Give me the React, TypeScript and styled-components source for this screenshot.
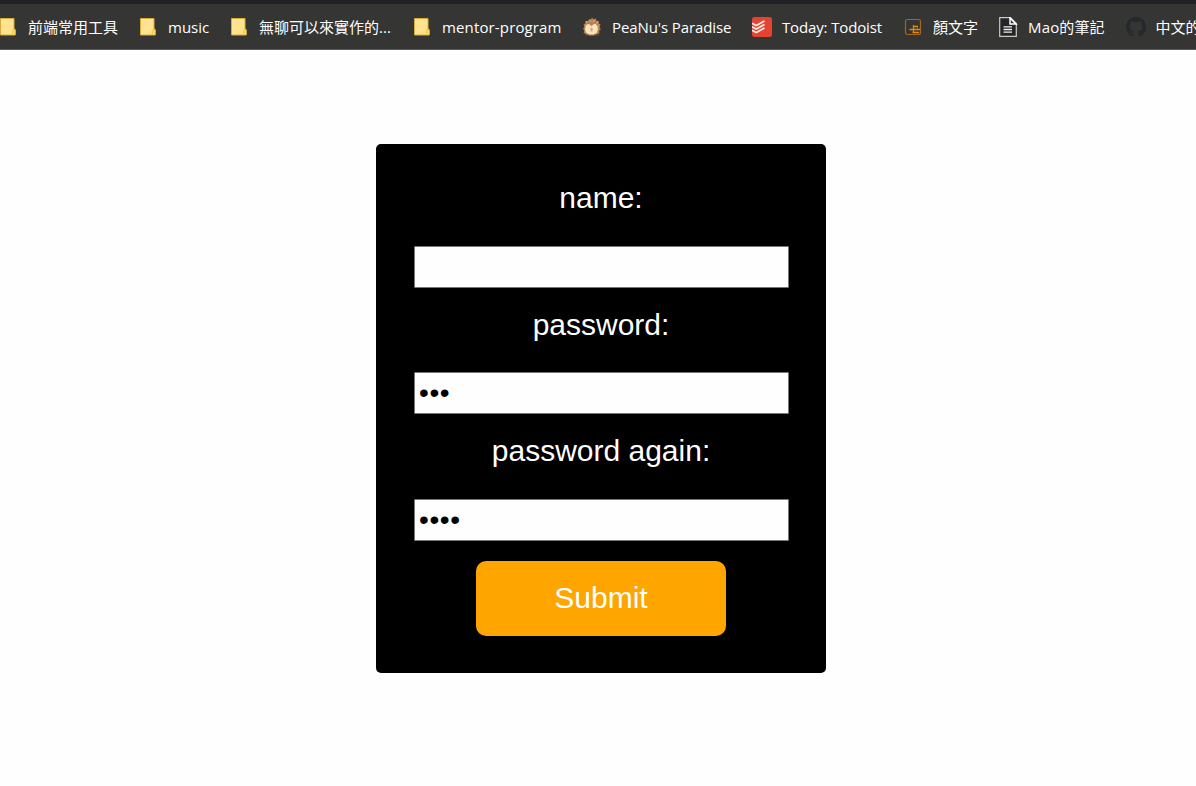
import React from "react";
import styled, { createGlobalStyle } from "styled-components";

const GlobalStyle = createGlobalStyle`
  * { box-sizing: border-box; }
  body {
    margin: 0;
    background: #fefefe;
    overflow: hidden;
    font-family: "Liberation Sans", Arial, sans-serif;
  }
`;

const Page = styled.div`
  width: 100%;
  height: 786px;
  display: flex;
  flex-direction: column;
  overflow: hidden;
`;

const BookmarkBar = styled.nav`
  flex: none;
  height: 50px;
  display: flex;
  align-items: center;
  gap: 20px;
  margin-left: -2px;
  background: #353533;
  border-top: 4px solid #202124;
  border-bottom: 1px solid #5b5b59;
  overflow: hidden;
`;

const Bookmark = styled.div`
  flex: none;
  display: flex;
  align-items: center;
  gap: 10px;
  height: 24px;
`;

const BookmarkLabel = styled.span<{ $width: number; $spacing?: number }>`
  width: ${(p) => p.$width}px;
  letter-spacing: ${(p) => p.$spacing ?? 0}px;
  font: 15px/24px "Open Sans", "Noto Sans CJK TC", sans-serif;
  color: #fff;
  white-space: nowrap;
`;

const Icon = styled.svg`
  flex: none;
  display: block;
  width: 20px;
  height: 20px;
`;

const Main = styled.main`
  flex: 1;
  display: flex;
  justify-content: center;
  align-items: flex-start;
  padding: 94px 0 0 6px;
`;

const Card = styled.form`
  width: 450px;
  height: 529px;
  display: flex;
  flex-direction: column;
  align-items: center;
  padding-top: 37px;
  background: #000;
  border-radius: 5px;
`;

const Field = styled.label<{ $height: number }>`
  display: flex;
  flex-direction: column;
  align-items: center;
  justify-content: space-between;
  height: ${(p) => p.$height}px;
  margin-bottom: 20px;
  color: #fff;
  font-size: 30px;
  line-height: 34px;
`;

const Input = styled.input`
  width: 375px;
  height: 42px;
  margin: 0 0 0 1px;
  padding: 1px 3px 1px 4px;
  border: 1px solid #767676;
  border-radius: 1px;
  background: #fefefe;
  color: #000;
  font: 30px "Liberation Sans", Arial, sans-serif;
  outline: none;

  &[type="password"] {
    padding-bottom: 2px;
    font-size: 28px;
    letter-spacing: 0.6px;
  }
`;

const SubmitButton = styled.button`
  width: 250px;
  height: 75px;
  padding: 0 0 2px;
  border: 0;
  border-radius: 10px;
  background: #ffa500;
  color: #fff;
  font: 30px "Liberation Sans", Arial, sans-serif;
`;

const FolderIcon = () => (
  <Icon viewBox="0 0 20 20">
    <path d="M2.5 1.5h13.5v11h1.2v5.5H2.5z" fill="#ffe391" stroke="#d9ab3c" />
    <path d="M14.5 17.5v-4.2l1.5-1.3v-1" fill="none" stroke="#f0c02e" />
    <path d="M14.5 13h2.8v4.6h-2.8z" fill="#ffd75e" />
  </Icon>
);

const HedgehogIcon = () => (
  <Icon viewBox="0 0 20 20">
    <path
      d="M10 .5l1.4 1.8L14 1.6l.3 2.2 2.7.2-.4 2.3 2 1.3-1.1 2.1 1.3 2.5-1.6 1.4.2 2.8-2.3.5-1.4 1.7H5l-1.2-1.7-2.1-.8.5-2.6L1 11.8l1.3-2-.7-2.2 1.9-1.3-.1-2.3 2.7-.1L7 2l1.9.4z"
      fill="#b9814f"
    />
    <path d="M4 4l1 2M8 3l.4 2M12 3l-.4 2M16 5l-1.7 1.5M17 9l-2 .5M3 8l2 .5" stroke="#dfb080" />
    <path d="M3.600 9l2.200-2 2 .4 1.700 1.800 2-1.900 2.400-.2 1.500 2.400.6 3-1.400 3.600-2.600 1.400H6.600L4 15.600l-1-3z" fill="#f6e3bf" />
    <path d="M9.500 10.200l1.500 2-.7 2.400H8.700L8 12.200z" fill="#dba97a" />
    <path d="M3 18.200h4M12 18.200h5" stroke="#62462f" strokeWidth="1.2" />
  </Icon>
);

const TodoistIcon = () => (
  <Icon viewBox="0 0 20 20">
    <rect width="20" height="20" rx="2.3" fill="#e44332" />
    <g fill="none" stroke="#fff0e8" strokeWidth="1.7">
      <path d="M0 6.2l3.6 2.1q.6.3 1.2 0L12.5 4" />
      <path d="M0 9.7l3.6 2.1q.6.3 1.2 0l7.7-4.3" />
      <path d="M0 13.2l3.6 2.1q.6.3 1.2 0l7.7-4.3" />
    </g>
  </Icon>
);

const KaomojiIcon = () => (
  <Icon viewBox="0 0 20 20" fill="none">
    <rect x="2.5" y="2.5" width="15" height="15" rx="2" stroke="#a5661a" strokeWidth="1.2" />
    <path d="M10.500 8v7.500M10.500 9.500H15M6.500 12.500H17M9.500 15.500H16" stroke="#d98a17" strokeWidth="1.3" />
    <path d="M14.500 10v2" stroke="#a5661a" />
  </Icon>
);

const NoteIcon = () => (
  <Icon viewBox="0 0 20 20">
    <path d="M1.7.7h10.8l5.8 5.8v12.8H1.7z" fill="#252528" stroke="#c9c9c9" strokeWidth="1.2" />
    <path d="M12 1v6h6z" fill="#353533" stroke="#fff" strokeWidth="1.5" />
    <path d="M5.5 9.8H14M5.5 12.5H14M5.5 15.2H14" stroke="#eee" strokeWidth="1.3" />
  </Icon>
);

const GithubIcon = () => (
  <Icon viewBox="0 0 16 16" fill="#24292e">
    <path d="M8 0C3.58 0 0 3.58 0 8c0 3.54 2.29 6.53 5.47 7.59.4.07.55-.17.55-.38 0-.19-.01-.82-.01-1.49-2.01.37-2.53-.49-2.69-.94-.09-.23-.48-.94-.82-1.13-.28-.15-.68-.52-.01-.53.63-.01 1.08.58 1.23.82.72 1.21 1.87.87 2.33.66.07-.52.28-.87.51-1.07-1.78-.2-3.64-.89-3.64-3.95 0-.87.31-1.59.82-2.15-.08-.2-.36-1.02.08-2.12 0 0 .67-.21 2.2.82a7.6 7.6 0 0 1 4 0c1.53-1.04 2.2-.82 2.2-.82.44 1.1.16 1.92.08 2.12.51.56.82 1.27.82 2.15 0 3.07-1.87 3.75-3.65 3.95.29.25.54.73.54 1.48 0 1.07-.01 1.93-.01 2.2 0 .21.15.46.55.38A8 8 0 0 0 16 8c0-4.42-3.58-8-8-8z" />
  </Icon>
);

const bookmarks = [
  { label: "前端常用工具", width: 90, icon: <FolderIcon /> },
  { label: "music", width: 41, icon: <FolderIcon /> },
  { label: "無聊可以來實作的...", width: 133, icon: <FolderIcon /> },
  { label: "mentor-program", width: 120, spacing: 0.14, icon: <FolderIcon /> },
  { label: "PeaNu's Paradise", width: 120, spacing: -0.1, icon: <HedgehogIcon /> },
  { label: "Today: Todoist", width: 101, spacing: -0.14, icon: <TodoistIcon /> },
  { label: "顏文字", width: 45, icon: <KaomojiIcon /> },
  { label: "Mao的筆記", width: 77.5, spacing: 0.15, icon: <NoteIcon /> },
  { label: "中文的", width: 50, icon: <GithubIcon /> },
];

export default function App() {
  return (
    <>
      <GlobalStyle />
      <Page>
        <BookmarkBar>
          {bookmarks.map((b) => (
            <Bookmark key={b.label}>
              {b.icon}
              <BookmarkLabel $width={b.width} $spacing={b.spacing}>
                {b.label}
              </BookmarkLabel>
            </Bookmark>
          ))}
        </BookmarkBar>
        <Main>
          <Card onSubmit={(e) => e.preventDefault()}>
            <Field $height={107}>
              name:
              <Input type="text" />
            </Field>
            <Field $height={106}>
              password:
              <Input type="password" defaultValue="123" />
            </Field>
            <Field $height={107}>
              password again:
              <Input type="password" defaultValue="1234" />
            </Field>
            <SubmitButton type="submit">Submit</SubmitButton>
          </Card>
        </Main>
      </Page>
    </>
  );
}
